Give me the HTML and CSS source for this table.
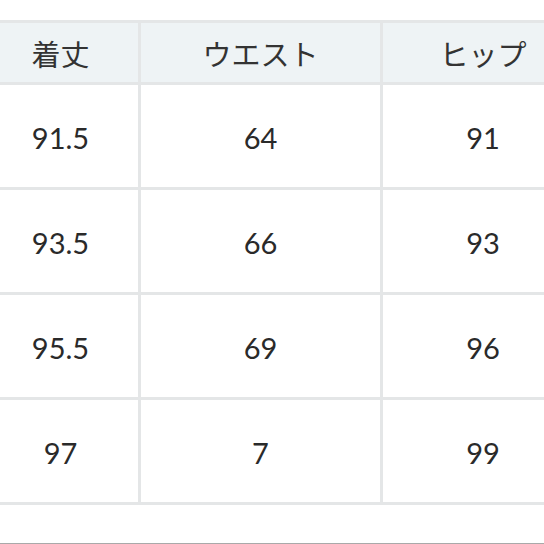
FILE: index.html
```html
<!DOCTYPE html>
<html lang="ja">
<head>
<meta charset="utf-8">
<title>サイズ表</title>
<link rel="stylesheet" href="styles.css">
</head>
<body>
<div class="page">
  <div class="size-table">
    <div class="cell head">着丈</div>
    <div class="cell head">ウエスト</div>
    <div class="cell head">ヒップ</div>
    <div class="cell">91.5</div>
    <div class="cell">64</div>
    <div class="cell">91</div>
    <div class="cell">93.5</div>
    <div class="cell">66</div>
    <div class="cell">93</div>
    <div class="cell">95.5</div>
    <div class="cell">69</div>
    <div class="cell">96</div>
    <div class="cell">97</div>
    <div class="cell">7</div>
    <div class="cell">99</div>
  </div>
  <div class="bottom-rule"></div>
</div>
</body>
</html>
```
FILE: styles.css
```css
html, body {
  margin: 0;
  padding: 0;
  background: #ffffff;
  overflow: hidden;
}

.page {
  width: 544px;
  height: 544px;
  overflow: hidden;
  display: flex;
  flex-direction: column;
  background: #ffffff;
}

.size-table {
  margin-top: 20px;
  margin-left: -20px;
  width: 606px;
  display: grid;
  grid-template-columns: 155px 239px 200px;
  grid-template-rows: 59px repeat(4, 102px);
  gap: 3px;
  padding: 3px;
  background: #e4e6e7;
  flex-shrink: 0;
}

.cell {
  background: #ffffff;
  display: flex;
  align-items: center;
  justify-content: center;
  font-family: "Lato", "Noto Sans CJK JP", sans-serif;
  font-size: 29px;
  color: #2a2a2a;
  padding-top: 2px;
}

.cell.head {
  background: #eef3f5;
  font-family: "Noto Sans CJK JP", sans-serif;
  font-size: 29px;
  color: #333333;
  padding-top: 0;
}

.bottom-rule {
  margin-top: auto;
  height: 1px;
  background: #a9a9a9;
  flex-shrink: 0;
}
```
